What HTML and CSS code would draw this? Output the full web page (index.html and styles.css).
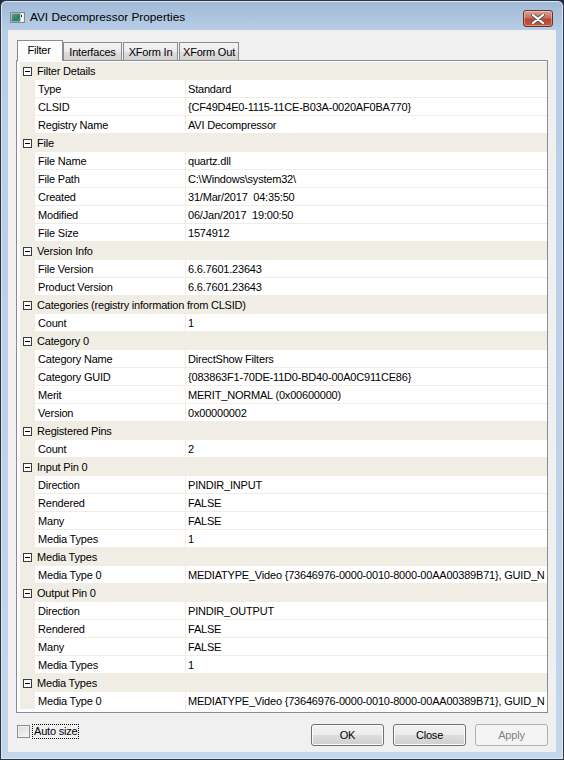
FILE: index.html
```html
<!DOCTYPE html>
<html lang="en">
<head>
    <meta charset="UTF-8">
    <title>AVI Decompressor Properties</title>
    <link rel="stylesheet" href="styles.css">
</head>
<body>
    <div class="window">
        <div class="titlebar">
            <svg class="app-icon" width="15" height="11" viewBox="0 0 15 11">
                <defs>
                    <linearGradient id="ig" x1="0" y1="0" x2="1" y2="1">
                        <stop offset="0" stop-color="#6f9a95"/>
                        <stop offset="0.6" stop-color="#2f7f6a"/>
                        <stop offset="1" stop-color="#4c8c57"/>
                    </linearGradient>
                </defs>
                <rect x="0.5" y="0.5" width="14" height="10" fill="#d8dde2" stroke="#7d8a96"/>
                <rect x="1.5" y="1.5" width="9" height="8" fill="url(#ig)"/>
                <rect x="10.5" y="1.5" width="3" height="8" fill="#ffffff"/>
                <rect x="11" y="3" width="1" height="2" fill="#1a2a33"/>
            </svg>
            <span class="title">AVI Decompressor Properties</span>
            <div class="close-btn">
                <svg width="14" height="10" viewBox="0 0 14 10">
                    <path d="M2 1 L12 9 M12 1 L2 9" stroke="#5b5b5b" stroke-width="4" stroke-linecap="round"/>
                    <path d="M2 1 L12 9 M12 1 L2 9" stroke="#ffffff" stroke-width="2.2" stroke-linecap="round"/>
                </svg>
            </div>
        </div>

        <div class="client">
            <div class="tabs">
                <div class="tab active">Filter</div>
                <div class="tab w-interfaces">Interfaces</div>
                <div class="tab w-xin">XForm In</div>
                <div class="tab w-xout">XForm Out</div>
            </div>

            <div class="tab-panel">
                <div class="propgrid">
                    <div class="cat"><span class="toggle"></span>Filter Details</div>
                    <div class="prop"><span class="name">Type</span><span class="value">Standard</span></div>
                    <div class="prop"><span class="name">CLSID</span><span class="value">{CF49D4E0-1115-11CE-B03A-0020AF0BA770}</span></div>
                    <div class="prop"><span class="name">Registry Name</span><span class="value">AVI Decompressor</span></div>

                    <div class="cat"><span class="toggle"></span>File</div>
                    <div class="prop"><span class="name">File Name</span><span class="value">quartz.dll</span></div>
                    <div class="prop"><span class="name">File Path</span><span class="value">C:\Windows\system32\</span></div>
                    <div class="prop"><span class="name">Created</span><span class="value">31/Mar/2017&nbsp; 04:35:50</span></div>
                    <div class="prop"><span class="name">Modified</span><span class="value">06/Jan/2017&nbsp; 19:00:50</span></div>
                    <div class="prop"><span class="name">File Size</span><span class="value">1574912</span></div>

                    <div class="cat"><span class="toggle"></span>Version Info</div>
                    <div class="prop"><span class="name">File Version</span><span class="value">6.6.7601.23643</span></div>
                    <div class="prop"><span class="name">Product Version</span><span class="value">6.6.7601.23643</span></div>

                    <div class="cat"><span class="toggle"></span>Categories (registry information from CLSID)</div>
                    <div class="prop"><span class="name">Count</span><span class="value">1</span></div>

                    <div class="cat"><span class="toggle"></span>Category 0</div>
                    <div class="prop"><span class="name">Category Name</span><span class="value">DirectShow Filters</span></div>
                    <div class="prop"><span class="name">Category GUID</span><span class="value">{083863F1-70DE-11D0-BD40-00A0C911CE86}</span></div>
                    <div class="prop"><span class="name">Merit</span><span class="value">MERIT_NORMAL (0x00600000)</span></div>
                    <div class="prop"><span class="name">Version</span><span class="value">0x00000002</span></div>

                    <div class="cat"><span class="toggle"></span>Registered Pins</div>
                    <div class="prop"><span class="name">Count</span><span class="value">2</span></div>

                    <div class="cat"><span class="toggle"></span>Input Pin 0</div>
                    <div class="prop"><span class="name">Direction</span><span class="value">PINDIR_INPUT</span></div>
                    <div class="prop"><span class="name">Rendered</span><span class="value">FALSE</span></div>
                    <div class="prop"><span class="name">Many</span><span class="value">FALSE</span></div>
                    <div class="prop"><span class="name">Media Types</span><span class="value">1</span></div>

                    <div class="cat"><span class="toggle"></span>Media Types</div>
                    <div class="prop"><span class="name">Media Type 0</span><span class="value">MEDIATYPE_Video {73646976-0000-0010-8000-00AA00389B71}, GUID_N</span></div>

                    <div class="cat"><span class="toggle"></span>Output Pin 0</div>
                    <div class="prop"><span class="name">Direction</span><span class="value">PINDIR_OUTPUT</span></div>
                    <div class="prop"><span class="name">Rendered</span><span class="value">FALSE</span></div>
                    <div class="prop"><span class="name">Many</span><span class="value">FALSE</span></div>
                    <div class="prop"><span class="name">Media Types</span><span class="value">1</span></div>

                    <div class="cat"><span class="toggle"></span>Media Types</div>
                    <div class="prop"><span class="name">Media Type 0</span><span class="value">MEDIATYPE_Video {73646976-0000-0010-8000-00AA00389B71}, GUID_N</span></div>
                </div>
            </div>

            <div class="footer">
                <label class="check">
                    <span class="box"></span>
                    <span class="focus">Auto size</span>
                </label>
                <div class="buttons">
                    <button>OK</button>
                    <button>Close</button>
                    <button disabled>Apply</button>
                </div>
            </div>
        </div>
    </div>
</body>
</html>
```

FILE: styles.css
```css
html, body {
    margin: 0;
    padding: 0;
    background: #1c2a33;
}
body {
    font-family: "Liberation Sans", Arial, sans-serif;
    font-size: 11px;
    letter-spacing: -0.2px;
    color: #000;
}
.window {
    box-sizing: border-box;
    width: 564px;
    height: 760px;
    border: 1px solid #2c3540;
    border-radius: 6px 6px 0 0;
    background: linear-gradient(#a0b9d6 0, #b8cee7 30px, #c2d6ec 100%);
    box-shadow: inset 0 0 0 1px #dbe7f4;
    display: flex;
    flex-direction: column;
}
.titlebar {
    height: 29px;
    display: flex;
    align-items: center;
    position: relative;
}
.app-icon {
    margin-left: 9px;
    margin-top: 3px;
}
.title {
    margin-left: 5px;
    margin-top: 2px;
    font-size: 11.8px;
    letter-spacing: 0;
}
.close-btn {
    position: absolute;
    right: 10px;
    top: 9px;
    box-sizing: border-box;
    width: 30px;
    height: 17px;
    border: 1px solid #6b3027;
    border-radius: 3px;
    background: linear-gradient(#dba192 0, #c8705c 45%, #b9452f 55%, #c4593e 100%);
    box-shadow: inset 0 0 0 1px rgba(255,255,255,0.35);
    display: flex;
    align-items: center;
    justify-content: center;
}
.client {
    box-sizing: border-box;
    margin: 0 7px 0 7px;
    height: 722px;
    background: #f0f0f0;
    padding: 10px 8px 0 8px;
    display: flex;
    flex-direction: column;
}

/* tabs */
.tabs {
    display: flex;
    align-items: flex-end;
    height: 20px;
    position: relative;
    z-index: 1;
}
.tab {
    box-sizing: border-box;
    height: 18px;
    margin-left: 1px;
    border: 1px solid #898c95;
    border-bottom: none;
    background: linear-gradient(#f3f3f3 0, #ebebeb 50%, #dedede 51%, #d2d2d2 100%);
    text-align: center;
    line-height: 18px;
}
.tab.active {
    width: 46px;
    height: 21px;
    margin-left: 1px;
    margin-bottom: -1px;
    background: #fcfcfc;
    line-height: 18px;
    padding-right: 2px;
}
.w-interfaces { width: 59px; margin-left: 0; }
.w-xin { width: 55px; }
.w-xout { width: 60px; }

.tab-panel {
    box-sizing: border-box;
    width: 532px;
    height: 653px;
    border: 1px solid #898c95;
    background: #fcfcfc;
    padding: 1px 0 0 3px;
}

/* property grid */
.propgrid {
    width: 527px;
    background: #f0eee4;
}
.cat {
    height: 18px;
    display: flex;
    align-items: center;
    line-height: 19px;
}
.toggle {
    box-sizing: border-box;
    width: 9px;
    height: 9px;
    margin: 0 5px 0 3px;
    border: 1px solid #3b3b3b;
    background: #fff;
    position: relative;
}
.toggle::after {
    content: "";
    position: absolute;
    left: 1px;
    top: 3px;
    width: 5px;
    height: 1px;
    background: #000;
}
.prop {
    height: 17px;
    margin-bottom: 1px;
    display: flex;
    padding-left: 15px;
    line-height: 18px;
}
.prop .name {
    box-sizing: border-box;
    width: 150px;
    padding-left: 3px;
    background: #fff;
    margin-right: 1px;
    white-space: nowrap;
    overflow: hidden;
}
.prop .value {
    flex: 1;
    min-width: 0;
    padding-left: 2px;
    background: #fff;
    white-space: nowrap;
    overflow: hidden;
}

/* footer */
.footer {
    display: flex;
    align-items: flex-start;
    margin-top: 11px;
}
.check {
    display: flex;
    align-items: center;
    margin-left: 1px;
}
.box {
    box-sizing: border-box;
    width: 13px;
    height: 13px;
    border: 1px solid #8e8f8f;
    background: linear-gradient(135deg, #d9d9d9, #f8f8f8);
    box-shadow: inset 0 0 0 1px #f0f0f0;
}
.focus {
    margin-left: 2px;
    padding: 0 1px;
    border: 1px dotted #000;
    line-height: 13px;
}
.buttons {
    margin-left: auto;
    display: flex;
    gap: 9px;
}
button {
    box-sizing: border-box;
    width: 73px;
    height: 22px;
    border: 1px solid #707070;
    border-radius: 3px;
    background: linear-gradient(#f2f2f2 0, #ebebeb 50%, #dddddd 51%, #cfcfcf 100%);
    box-shadow: inset 0 0 0 1px #fbfbfb;
    font-family: "Liberation Sans", Arial, sans-serif;
    font-size: 11px;
    letter-spacing: -0.2px;
    color: #000;
    padding: 0;
}
button:disabled {
    border-color: #adb2b5;
    background: #f4f4f4;
    box-shadow: none;
    color: #838383;
}
```
